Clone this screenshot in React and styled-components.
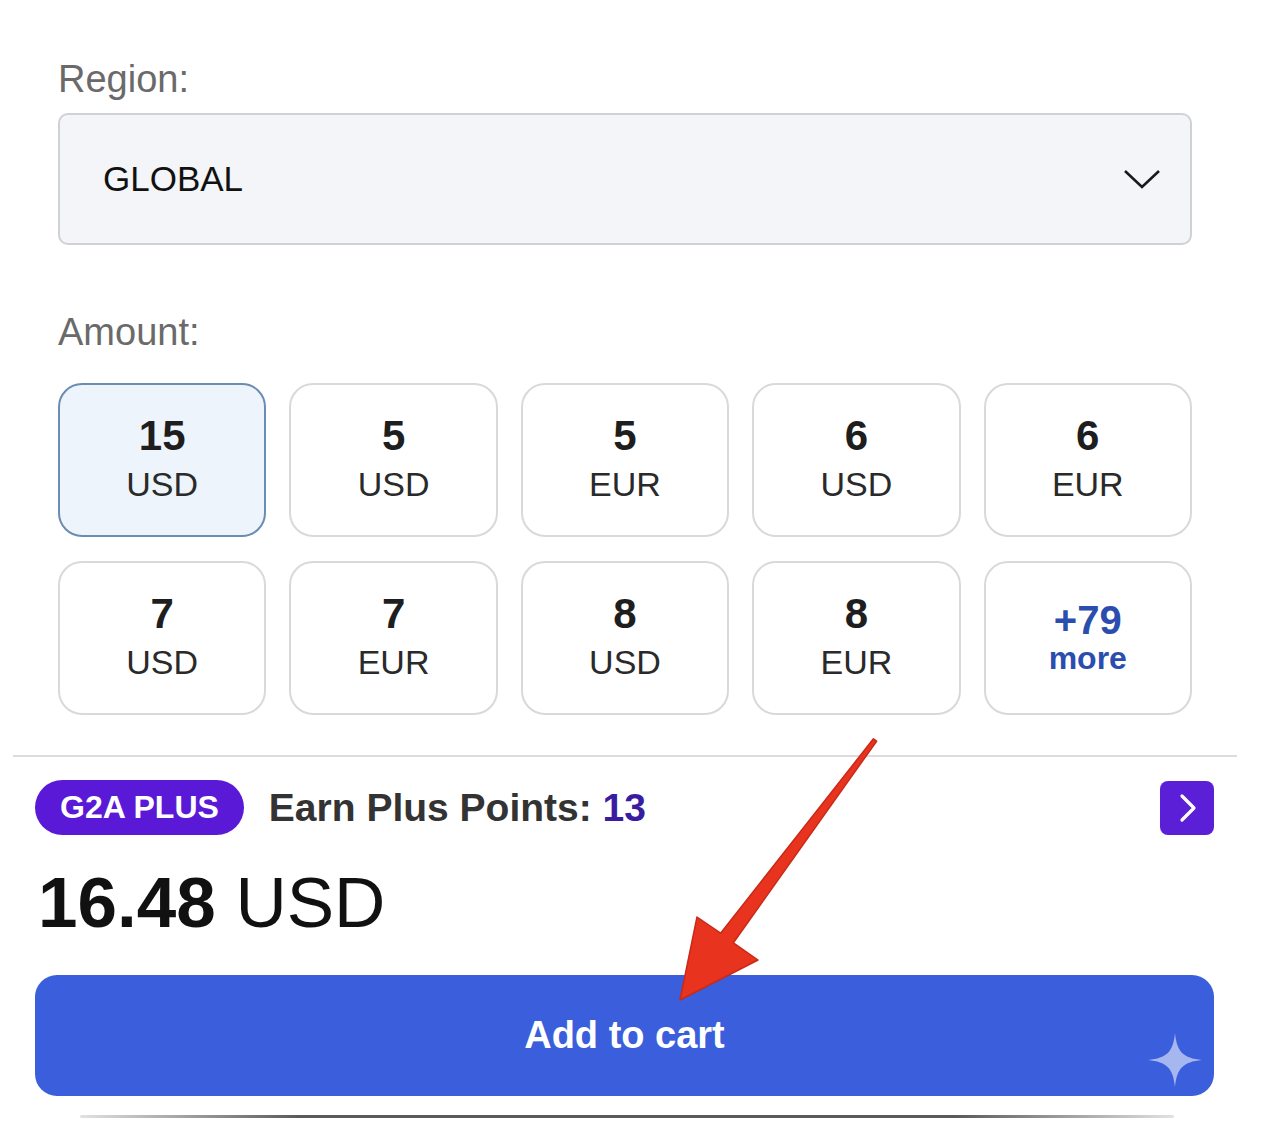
import React from 'react'
import styled, { createGlobalStyle } from 'styled-components'

const GlobalStyle = createGlobalStyle`
  html, body {
    margin: 0;
    padding: 0;
    background: #ffffff;
    font-family: "Liberation Sans", Arial, sans-serif;
  }
`

const Page = styled.div`
  position: relative;
  width: 1263px;
  height: 1123px;
  overflow: hidden;
  background: #fff;
`

const TopSection = styled.div`
  padding: 56px 71px 0 58px;
`

const Label = styled.div`
  font-size: 38px;
  line-height: 46px;
  color: #6a6a6a;
  margin-top: ${p => p.$top || 0}px;
`

const Select = styled.div`
  box-sizing: border-box;
  height: 132px;
  margin-top: 11px;
  padding: 0 28px 0 43px;
  display: flex;
  align-items: center;
  justify-content: space-between;
  background: #f3f5f9;
  border: 2px solid #cfd1d5;
  border-radius: 10px;
  font-size: 35px;
  color: #111;
`

const AmountGrid = styled.div`
  display: grid;
  grid-template-columns: repeat(5, 1fr);
  grid-auto-rows: 154px;
  column-gap: 23px;
  row-gap: 24px;
  margin-top: 28px;
`

const Tile = styled.div`
  box-sizing: border-box;
  display: flex;
  flex-direction: column;
  align-items: center;
  justify-content: center;
  border-radius: 24px;
  border: 2px solid ${p => (p.$selected ? '#6b8cb3' : '#d9d9d9')};
  background: ${p => (p.$selected ? '#eef4fb' : '#fff')};
`

const TileValue = styled.div`
  font-size: 42px;
  font-weight: 700;
  line-height: 48px;
  color: #1e1e1e;
`

const TileUnit = styled.div`
  font-size: 34px;
  line-height: 48px;
  color: #2a2a2a;
`

const MoreValue = styled.div`
  font-size: 40px;
  font-weight: 700;
  line-height: 40px;
  color: #2b4eae;
`

const MoreUnit = styled.div`
  font-size: 32px;
  font-weight: 700;
  line-height: 36px;
  color: #2b4eae;
`

const Divider = styled.div`
  height: 2px;
  background: #dcdcdc;
  margin: 40px 26px 0 13px;
`

const BottomSection = styled.div`
  padding: 23px 49px 0 35px;
`

const PlusRow = styled.div`
  display: flex;
  align-items: center;
  height: 55px;
`

const PlusBadge = styled.div`
  height: 55px;
  padding: 0 25px;
  display: flex;
  align-items: center;
  border-radius: 28px;
  background: #5a19d6;
  color: #fff;
  font-size: 32px;
  font-weight: 700;
  white-space: nowrap;
`

const EarnText = styled.div`
  margin-left: 25px;
  font-size: 39px;
  font-weight: 700;
  color: #333;
  flex: 1;
  white-space: nowrap;
`

const Points = styled.span`
  color: #3a1ca0;
`

const ArrowButton = styled.div`
  width: 54px;
  height: 54px;
  border-radius: 8px;
  background: #5a1fd6;
  display: flex;
  align-items: center;
  justify-content: center;
`

const Price = styled.div`
  margin-top: 33px;
  font-size: 71px;
  line-height: 70px;
  color: #111;
  padding-left: 3px;
`

const PriceAmount = styled.span`
  font-weight: 700;
`

const CartButton = styled.div`
  position: relative;
  margin-top: 37px;
  height: 121px;
  border-radius: 22px;
  background: #3a5edc;
  display: flex;
  align-items: center;
  justify-content: center;
  color: #fff;
  font-size: 38px;
  font-weight: 700;
`

const Sparkle = styled.svg`
  position: absolute;
  right: 10px;
  bottom: 7px;
`

const BottomEdge = styled.div`
  margin: 19px 40px 0 45px;
  height: 3px;
  border-radius: 3px;
  background: linear-gradient(90deg, #e2e2e2, #5a5a5a 20%, #5a5a5a 80%, #e2e2e2);
`

const Overlay = styled.svg`
  position: absolute;
  left: 0;
  top: 0;
  pointer-events: none;
`

const amounts = [
  { value: '15', unit: 'USD', selected: true },
  { value: '5', unit: 'USD' },
  { value: '5', unit: 'EUR' },
  { value: '6', unit: 'USD' },
  { value: '6', unit: 'EUR' },
  { value: '7', unit: 'USD' },
  { value: '7', unit: 'EUR' },
  { value: '8', unit: 'USD' },
  { value: '8', unit: 'EUR' }
]

export default function App() {
  return (
    <Page>
      <GlobalStyle />
      <TopSection>
        <Label>Region:</Label>
        <Select>
          <span>GLOBAL</span>
          <svg width="40" height="24" viewBox="0 0 40 24">
            <path d="M3 4 L20 20 L37 4" fill="none" stroke="#1a1a1a" strokeWidth="2.6" />
          </svg>
        </Select>
        <Label $top={64}>Amount:</Label>
        <AmountGrid>
          {amounts.map((a, i) => (
            <Tile key={i} $selected={a.selected}>
              <TileValue>{a.value}</TileValue>
              <TileUnit>{a.unit}</TileUnit>
            </Tile>
          ))}
          <Tile>
            <MoreValue>+79</MoreValue>
            <MoreUnit>more</MoreUnit>
          </Tile>
        </AmountGrid>
      </TopSection>
      <Divider />
      <BottomSection>
        <PlusRow>
          <PlusBadge>G2A PLUS</PlusBadge>
          <EarnText>
            Earn Plus Points: <Points>13</Points>
          </EarnText>
          <ArrowButton>
            <svg width="24" height="32" viewBox="0 0 24 32">
              <path d="M7 4 L19 16 L7 28" fill="none" stroke="#fff" strokeWidth="3.2" strokeLinecap="round" strokeLinejoin="round" />
            </svg>
          </ArrowButton>
        </PlusRow>
        <Price>
          <PriceAmount>16.48</PriceAmount> USD
        </Price>
        <CartButton>
          Add to cart
          <Sparkle width="58" height="58" viewBox="-29 -29 58 58">
            <path
              d="M0 -27 C2 -8 8 -2 27 0 C8 2 2 8 0 27 C-2 8 -8 2 -27 0 C-8 -2 -2 -8 0 -27 Z"
              fill="rgba(255,255,255,0.55)"
            />
          </Sparkle>
        </CartButton>
        <BottomEdge />
      </BottomSection>
      <Overlay width="1263" height="1123" viewBox="0 0 1263 1123">
        <polygon
          points="873.4,738.8 720.6,933.2 697,917 680,1000 758,960 733.4,942.8 876.6,741.2"
          fill="#e8331f"
          stroke="#c92a18"
          strokeWidth="1.5"
          strokeLinejoin="round"
        />
      </Overlay>
    </Page>
  )
}
